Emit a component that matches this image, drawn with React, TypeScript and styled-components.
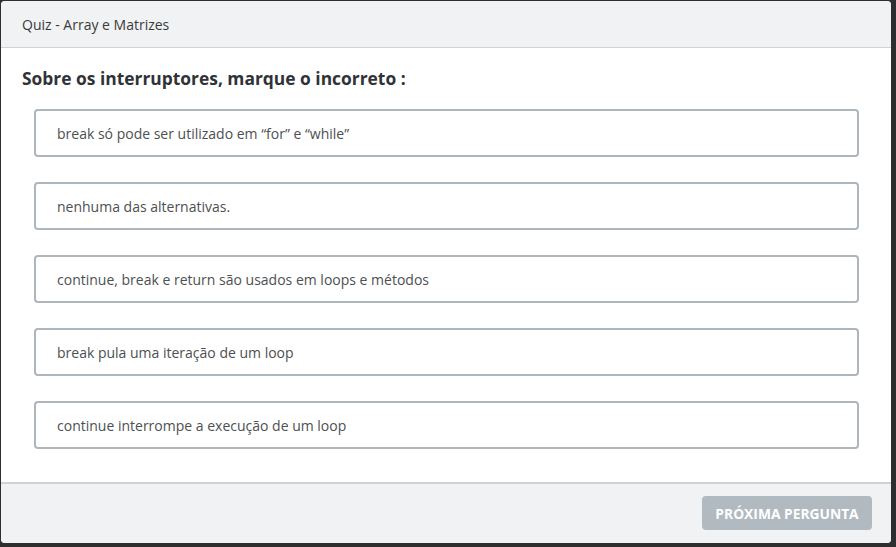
import React from "react";
import styled, { createGlobalStyle } from "styled-components";

const Global = createGlobalStyle`
  html, body { margin: 0; padding: 0; background: #2e2e2e; }
  body { font-family: "Open Sans", "Noto Sans", Arial, sans-serif; }
  * { box-sizing: border-box; }
`;

const Stage = styled.div`
  width: 896px;
  height: 547px;
  padding: 1px 5px 4px 1px;
`;

const Modal = styled.div`
  width: 890px;
  height: 542px;
  background: #fff;
  border-radius: 4px;
  overflow: hidden;
  display: flex;
  flex-direction: column;
`;

const Header = styled.div`
  height: 47px;
  flex: none;
  background: #f1f2f4;
  border-bottom: 1px solid #cfd2d6;
  display: flex;
  align-items: center;
  padding-left: 21px;
  font-size: 14px;
  color: #3a3a3a;
`;

const Body = styled.div`
  flex: 1;
  padding: 17px 32px 0 21px;
`;

const Question = styled.h2`
  margin: 0 0 18px 0;
  font-size: 17.4px;
  font-weight: 700;
  color: #2f3338;
  line-height: 26px;
`;

const Options = styled.div`
  display: flex;
  flex-direction: column;
  gap: 25px;
  padding-left: 12px;
`;

const Option = styled.div`
  height: 48px;
  border: 2px solid #aeb6bd;
  border-radius: 4px;
  display: flex;
  align-items: center;
  padding-left: 21px;
  font-size: 14px;
  color: #4d4f52;
  cursor: pointer;
`;

const Footer = styled.div`
  height: 61px;
  flex: none;
  background: #f1f2f4;
  border-top: 2px solid #cfd2d6;
  display: flex;
  justify-content: flex-end;
  align-items: flex-start;
  padding: 12px 19px 0 0;
`;

const NextButton = styled.button`
  width: 170px;
  height: 34px;
  border: none;
  border-radius: 4px;
  background: #b1b9c1;
  color: #fff;
  font-family: "Open Sans", "Noto Sans", Arial, sans-serif;
  font-size: 13.8px;
  font-weight: 700;
`;

const options = [
  "break só pode ser utilizado em “for” e “while”",
  "nenhuma das alternativas.",
  "continue, break e return são usados em loops e métodos",
  "break pula uma iteração de um loop",
  "continue interrompe a execução de um loop",
];

export default function App() {
  return (
    <>
      <Global />
      <Stage>
        <Modal>
          <Header>Quiz - Array e Matrizes</Header>
          <Body>
            <Question>Sobre os interruptores, marque o incorreto :</Question>
            <Options>
              {options.map((o) => (
                <Option key={o}>{o}</Option>
              ))}
            </Options>
          </Body>
          <Footer>
            <NextButton disabled>PRÓXIMA PERGUNTA</NextButton>
          </Footer>
        </Modal>
      </Stage>
    </>
  );
}
